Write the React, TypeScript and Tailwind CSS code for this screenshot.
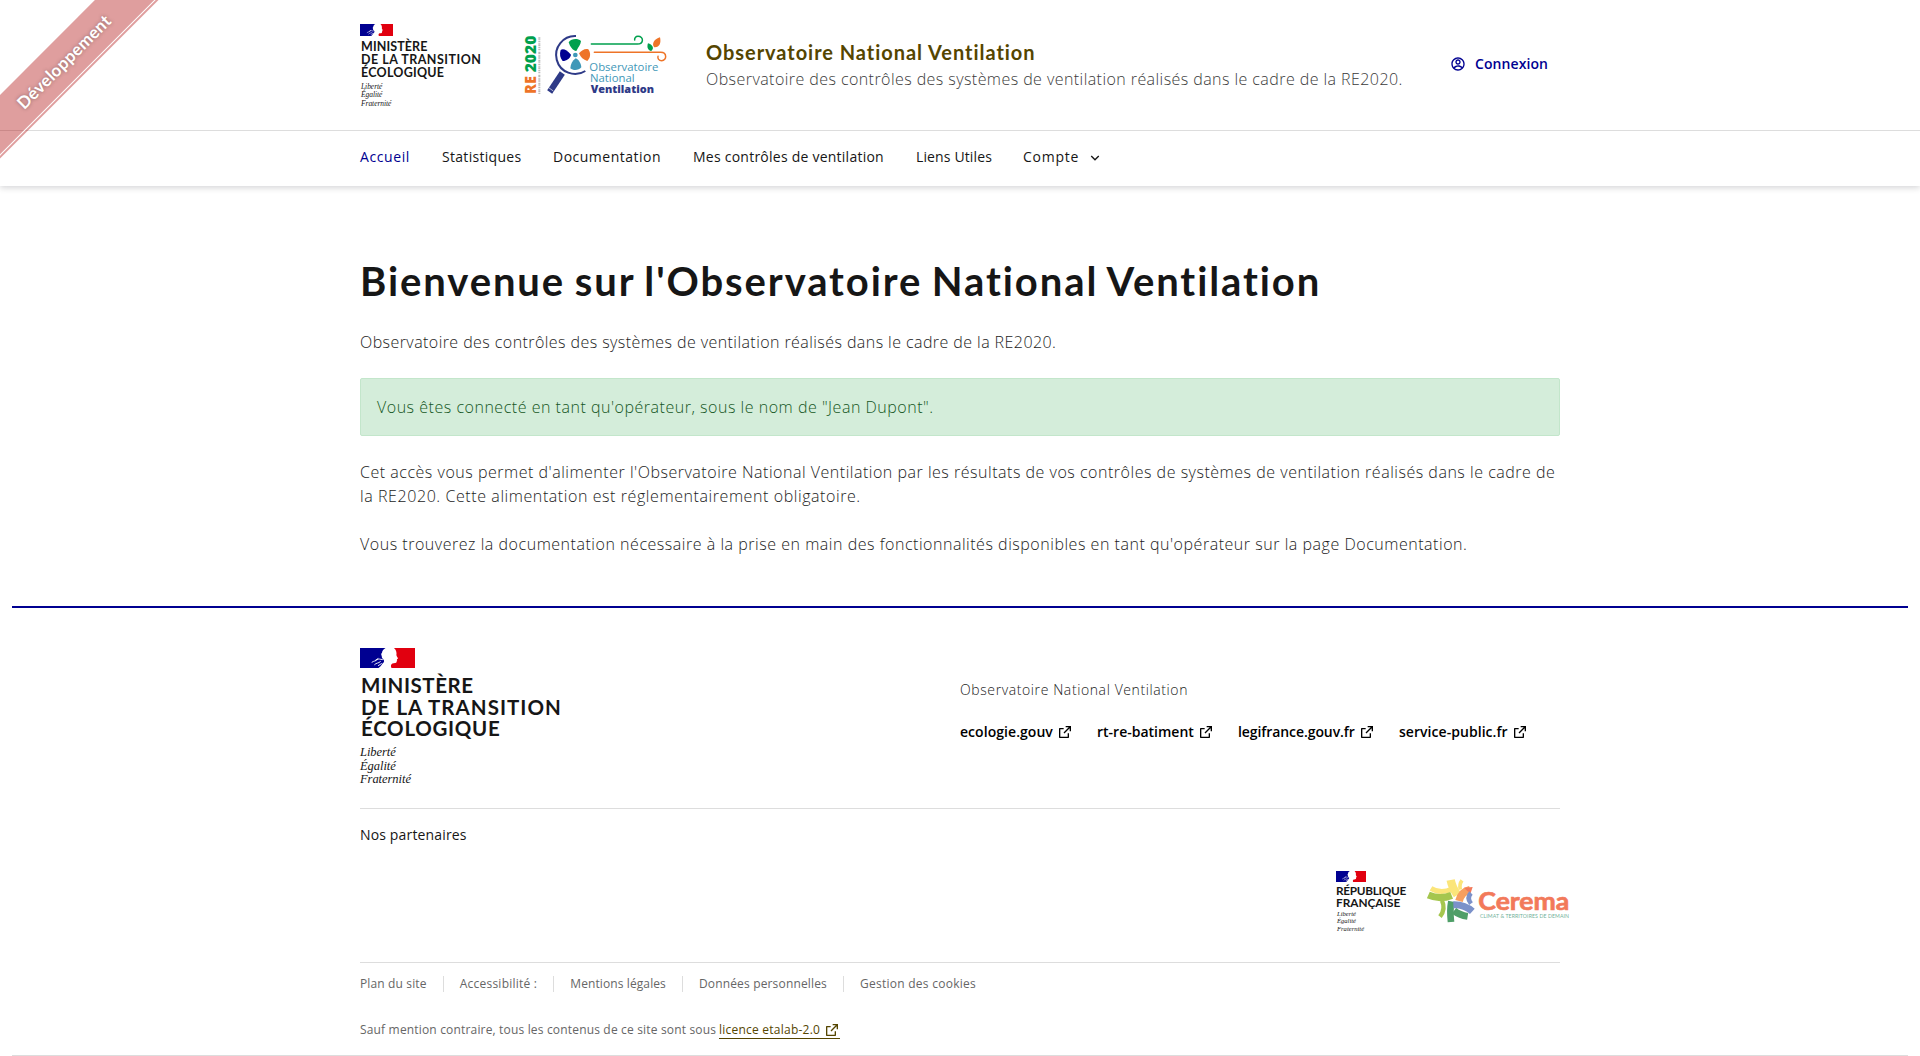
import { RiAccountCircleLine, RiArrowDownSLine, RiExternalLinkLine } from 'react-icons/ri';

function Flag({ className }: { className: string }) {
  return (
    <svg viewBox="0 0 55 20" preserveAspectRatio="none" className={className}>
      <path fill="#000091" d="M0 0H25.5C23.6 1 22.2 2.8 22 4.8C20.8 6 21.2 7 21.8 8C21.4 9.6 22.6 10.4 23.4 11.4C24.6 12.8 24.2 14 22.8 15.2C21.6 16.4 21 18.4 18.5 20H0Z" />
      <path fill="#e1000f" d="M55 0V20H31.5C30.4 18.2 31 16.4 32.4 15.6C34 15 36.4 15.4 36.6 14C37 13.4 36.4 12.8 37.2 12.2C36.6 11.4 37 11 38 10.4C37.6 9.2 36.4 8.2 36.4 7C36.8 5 36.6 2.4 34 0Z" />
      <path fill="none" stroke="#fff" strokeWidth="0.9" strokeLinecap="round" d="M12 14.2C14 12.6 15.6 13.4 17 11.6C18.6 10.6 20 11.2 22.4 11.6M14.6 16.6C16.4 14.6 18.4 15.6 20.4 13.6M18.4 17.6L21.4 15.6M15.6 12.2L18 10.6" />
    </svg>
  );
}

function Fan() {
  return (
    <svg viewBox="0 0 600 330" className="block h-[110px] w-[200px]" fill="none">
      <g fontFamily="'Open Sans', sans-serif" fontWeight="800" fontSize="46" transform="translate(107 252) rotate(-90)">
        <text x="0" y="0" textLength="54" lengthAdjust="spacingAndGlyphs" fill="#ee7428">RE</text>
        <text x="65" y="0" textLength="110" lengthAdjust="spacingAndGlyphs" fill="#00a04d">2020</text>
      </g>
      <path d="M118 252V82" stroke="#8d8d8d" strokeWidth="6" strokeDasharray="3 2 6 2 2 2 4 2" opacity="0.6" />
      <path d="M228 78A57 57 0 1 0 256 183" stroke="#2e3a87" strokeWidth="6" />
      <path d="M187 189L149 246" stroke="#2e3a87" strokeWidth="18" />
      <path d="M146 233L160 243" stroke="#fff" strokeWidth="2" />
      <path fill="#00a04d" d="M206 97C214 86 232 84 243 93C242 104 236 110 229 123C218 122 210 110 206 97Z" />
      <path fill="#ee7428" d="M237 130C246 120 256 114 265 118C273 130 272 143 262 153C250 150 242 142 237 130Z" />
      <path fill="#3f98b8" d="M227 145C236 148 243 160 244 172C236 182 220 183 211 175C212 162 217 152 227 145Z" />
      <path fill="#000091" d="M182 120C190 115 200 120 213 134C210 146 200 152 188 153C180 144 178 132 182 120Z" />
      <circle cx="226" cy="135" r="7" fill="#3f98b8" />
      <path d="M274 102H412C432 102 432 79 414 79C407 79 403 84 404 90" stroke="#00a04d" strokeWidth="4.5" strokeLinecap="round" />
      <path d="M283 127H482C502 127 501 152 485 152C477 152 472 146 474 139" stroke="#ee7428" strokeWidth="4.5" strokeLinecap="round" />
      <path fill="#ee7428" d="M480 82C484 100 478 113 463 112C453 102 464 86 480 82Z" />
      <path fill="#00a04d" d="M444 100C457 104 464 114 454 123C443 122 440 111 444 100Z" />
      <g fontFamily="'Open Sans', sans-serif" fontSize="33">
        <text x="268" y="183" textLength="207" lengthAdjust="spacingAndGlyphs" fill="#3f98b8">Observatoire</text>
        <text x="270" y="216" textLength="134" lengthAdjust="spacingAndGlyphs" fill="#3f98b8">National</text>
        <text x="272" y="250" textLength="190" lengthAdjust="spacingAndGlyphs" fill="#2e3a87" fontWeight="800">Ventilation</text>
      </g>
    </svg>
  );
}

function Cerema() {
  return (
    <svg viewBox="0 0 480 195" className="block h-[65px] w-[160px]" fill="none">
      <path d="M33 70Q62 88 96 72" stroke="#fbe57a" strokeWidth="15" />
      <path d="M25 90Q60 105 95 91" stroke="#a5c64e" strokeWidth="22" />
      <path d="M66 107Q78 132 60 155" stroke="#a5c64e" strokeWidth="13" />
      <path d="M94 109Q89 135 93 171" stroke="#4f9f68" strokeWidth="20" />
      <path d="M92 45Q96 66 112 90" stroke="#fbe57a" strokeWidth="25" />
      <path d="M126 46Q117 58 121 74" stroke="#fbe57a" strokeWidth="11" />
      <path d="M150 74Q124 80 117 108" stroke="#f79f5f" strokeWidth="23" />
      <path d="M132 68L158 66L152 84Q140 78 132 68Z" fill="#f2795a" />
      <path d="M153 84Q139 98 153 116" stroke="#7b91c9" strokeWidth="14" />
      <path d="M100 119Q134 118 157 139" stroke="#7b91c9" strokeWidth="21" />
      <path d="M102 137Q118 150 143 154" stroke="#4f9f68" strokeWidth="21" />
      <text x="175" y="135" textLength="273" lengthAdjust="spacingAndGlyphs" fontFamily="Lato, sans-serif" fontWeight="700" fontSize="76" fill="#f2795a" stroke="#f2795a" strokeWidth="2">Cerema</text>
      <text x="180" y="158" textLength="267" fontFamily="Lato, sans-serif" fontWeight="400" fontSize="15.5" fill="#6fb199">CLIMAT &amp; TERRITOIRES DE DEMAIN</text>
    </svg>
  );
}

const nav = [
  { label: 'Accueil', cls: 'w-[82px] tracking-[0.6px] text-[#000091]' },
  { label: 'Statistiques', cls: 'w-[111px] tracking-[0.3px]' },
  { label: 'Documentation', cls: 'w-[140px] tracking-[0.49px]' },
  { label: 'Mes contrôles de ventilation', cls: 'w-[223px] tracking-[0.24px]' },
  { label: 'Liens Utiles', cls: 'w-[107px] tracking-[0.13px]' },
  { label: 'Compte', cls: 'w-[57px] tracking-[0.75px]' },
];

const sites = [
  { label: 'ecologie.gouv', cls: 'w-[137px] tracking-[0.05px]' },
  { label: 'rt-re-batiment', cls: 'w-[141px] tracking-[0px]' },
  { label: 'legifrance.gouv.fr', cls: 'w-[161px] tracking-[-0.08px]' },
  { label: 'service-public.fr', cls: 'tracking-[0.05px]' },
];

const legal = [
  { label: 'Plan du site', cls: 'tracking-[0.14px]' },
  { label: 'Accessibilité :', cls: 'tracking-[0.24px]' },
  { label: 'Mentions légales', cls: 'tracking-[0.1px]' },
  { label: 'Données personnelles', cls: 'tracking-[0.16px]' },
  { label: 'Gestion des cookies', cls: 'tracking-[0.26px]' },
];

export default function App() {
  return (
    <div className="relative h-[1056px] w-full overflow-hidden bg-white font-['Open_Sans',sans-serif] text-[#161616]">
      <header className="h-[186px] shadow-[0_2px_6px_rgba(0,0,18,0.16)]">
        <div className="h-[131px] border-b border-[#dddddd]">
          <div className="mx-auto flex w-[1200px]">
            <div className="w-[140px] pt-6">
              <Flag className="block h-3 w-[33px]" />
              <p className="mt-[4px] ml-px w-[122px] font-['Lato',sans-serif] text-[12.5px] leading-[13px] font-bold whitespace-nowrap">
                <span className="block tracking-[0.1px]">MINISTÈRE</span>
                <span className="block tracking-[0.5px]">DE LA TRANSITION</span>
                <span className="block tracking-[0.25px]">ÉCOLOGIQUE</span>
              </p>
              <p className="mt-[4px] ml-px w-[60px] font-['Liberation_Serif',serif] text-[7.5px] leading-[8.4px] tracking-[-0.05px] italic">
                Liberté<br />Égalité<br />Fraternité
              </p>
            </div>
            <div className="pt-[10px]"><Fan /></div>
            <div className="ml-[6px] w-[744px] pt-[38px] whitespace-nowrap">
              <p className="font-['Lato',sans-serif] text-xl leading-7 font-bold tracking-[0.96px] text-[#554500]">Observatoire National Ventilation</p>
              <p className="mt-px text-base leading-6 font-light tracking-[0.435px] text-[#3a3a3a]">Observatoire des contrôles des systèmes de ventilation réalisés dans le cadre de la RE2020.</p>
            </div>
            <a className="flex items-center gap-[9px] self-start pt-[52px] text-sm leading-6 font-semibold tracking-[0.08px] text-[#000091]">
              <RiAccountCircleLine className="size-4" />Connexion
            </a>
          </div>
        </div>
        <nav className="mx-auto flex w-[1200px] pt-[14px] text-sm leading-6 whitespace-nowrap">
          {nav.map((n) => <a key={n.label} className={n.cls}>{n.label}</a>)}
          <RiArrowDownSLine className="mt-[5px] ml-[7px] size-4" />
        </nav>
      </header>

      <main className="mx-auto w-[1200px] pt-[71px] text-base leading-6 font-light text-[#1c1c1c]">
        <h1 className="font-['Lato',sans-serif] text-[40px] leading-[48px] font-bold tracking-[1.91px] whitespace-nowrap text-[#161616] [word-spacing:-2px]">Bienvenue sur l'Observatoire National Ventilation</h1>
        <p className="mt-[25px] tracking-[0.43px]">Observatoire des contrôles des systèmes de ventilation réalisés dans le cadre de la RE2020.</p>
        <div className="mt-6 h-[58px] rounded-[2px] border border-[#c3e6cb] bg-[#d4edda] p-4 tracking-[0.52px] text-[#155724]">
          Vous êtes connecté en tant qu'opérateur, sous le nom de "Jean Dupont".
        </div>
        <p className="mt-6 whitespace-nowrap">
          <span className="tracking-[0.52px]">Cet accès vous permet d'alimenter l'Observatoire National Ventilation par les résultats de vos contrôles de systèmes de ventilation réalisés dans le cadre de</span><br />
          <span className="tracking-[0.58px]">la RE2020. Cette alimentation est réglementairement obligatoire.</span>
        </p>
        <p className="mt-6 tracking-[0.53px] whitespace-nowrap">Vous trouverez la documentation nécessaire à la prise en main des fonctionnalités disponibles en tant qu'opérateur sur la page Documentation.</p>
      </main>

      <footer className="mx-3 mt-[50px] h-[450px] border-t-2 border-b border-t-[#000091] border-b-[#dddddd]">
        <div className="mx-auto w-[1200px]">
          <div className="flex h-[201px] border-b border-[#dddddd]">
            <div className="w-[600px] pt-10">
              <Flag className="block h-5 w-[55px]" />
              <p className="mt-[7px] ml-px font-['Lato',sans-serif] text-[20.5px] leading-[21.7px] font-bold whitespace-nowrap">
                <span className="block tracking-[0.55px]">MINISTÈRE</span>
                <span className="block tracking-[1.02px]">DE LA TRANSITION</span>
                <span className="block tracking-[0.7px]">ÉCOLOGIQUE</span>
              </p>
              <p className="mt-[6px] font-['Liberation_Serif',serif] text-[12.5px] leading-[13.4px] tracking-[-0.05px] italic">
                Liberté<br />Égalité<br />Fraternité
              </p>
            </div>
            <div className="pt-[70px] text-sm leading-6 whitespace-nowrap">
              <p className="font-light tracking-[0.6px] text-[#222222]">Observatoire National Ventilation</p>
              <div className="mt-[18px] flex font-semibold text-[#000000]">
                {sites.map((s) => (
                  <a key={s.label} className={`flex items-center gap-1 ${s.cls}`}>{s.label}<RiExternalLinkLine className="size-4" /></a>
                ))}
              </div>
            </div>
          </div>
          <div className="h-[154px] border-b border-[#dddddd]">
            <p className="pt-[14px] text-sm leading-6 tracking-[0.15px]">Nos partenaires</p>
            <div className="ml-[976px] flex w-[260px]">
              <div className="w-[84px] pt-[24px]">
                <Flag className="block h-[11px] w-[30px]" />
                <p className="mt-[3px] font-['Lato',sans-serif] text-[11.8px] leading-[11.5px] font-bold">
                  <span className="block tracking-[-0.3px]">RÉPUBLIQUE</span>
                  <span className="block">FRANÇAISE</span>
                </p>
                <p className="mt-[2px] ml-px font-['Liberation_Serif',serif] text-[6.6px] leading-[7.3px] italic">
                  Liberté<br />Égalité<br />Fraternité
                </p>
              </div>
              <div className="pt-[18px]"><Cerema /></div>
            </div>
          </div>
          <ul className="flex pt-[9px] text-xs leading-6 whitespace-nowrap text-[#666666]">
            {legal.map((l, i) => (
              <li key={l.label} className="flex items-center">
                {i > 0 && <span className="mx-4 h-4 w-px bg-[#dddddd]" />}
                <a className={l.cls}>{l.label}</a>
              </li>
            ))}
          </ul>
          <div className="mt-[25px] flex text-xs leading-[18px] whitespace-nowrap text-[#666666]">
            <p className="w-[359px] tracking-[0.17px]">Sauf mention contraire, tous les contenus de ce site sont sous</p>
            <a className="flex h-[18px] items-center gap-1 border-b border-[#554500] tracking-[0.23px] text-[#554500]">licence etalab-2.0<RiExternalLinkLine className="size-4" /></a>
          </div>
        </div>
      </footer>

      <div className="pointer-events-none absolute -top-[87px] -left-[87px] flex size-[300px] -rotate-45 items-center justify-center">
        <div className="relative h-[45px] w-[300px] bg-[#aa0000]/38 text-center font-['Lato',sans-serif] text-[17px] leading-[43px] font-bold tracking-[0.3px] text-white [text-shadow:0_0_4px_rgba(0,0,0,0.35)]">
          <span className="pl-[3px]">Développement</span>
          <div className="absolute inset-x-0 bottom-[2px] h-px bg-white" />
        </div>
      </div>
    </div>
  );
}
